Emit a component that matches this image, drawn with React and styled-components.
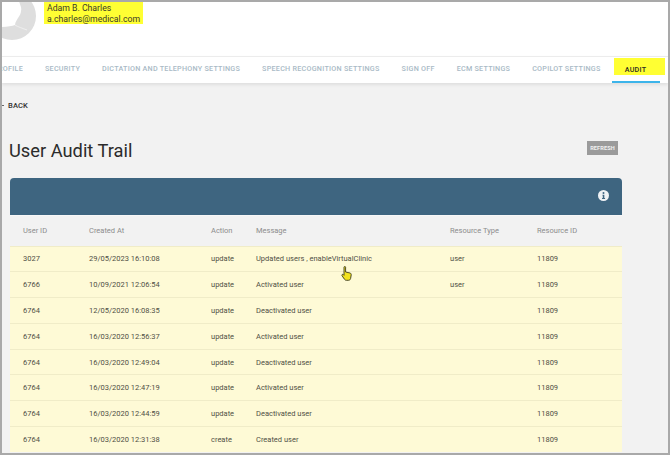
import React from "react";
import styled, { createGlobalStyle } from "styled-components";

const Global = createGlobalStyle`
  html, body { margin: 0; padding: 0; background: #f2f2f2; }
  * { box-sizing: border-box; }
`;

const Frame = styled.div`
  width: 670px;
  height: 455px;
  border: 2px solid #a9a9a9;
  background: #f2f2f2;
  overflow: hidden;
  font-family: Roboto, "Liberation Sans", sans-serif;
  display: flex;
  flex-direction: column;
`;

const Header = styled.header`
  height: 54px;
  flex: none;
  background: #fff;
  display: flex;
  align-items: flex-start;
  overflow: hidden;
`;

const Avatar = styled.svg`
  width: 34px;
  height: 38px;
  flex: none;
  display: block;
`;

const UserInfo = styled.div`
  margin-left: 8px;
  width: 99px;
  height: 22px;
  padding: 1px 0 0 3px;
  background: #ffff33;
  color: #3a3a2a;
  font-size: 8.7px;
  line-height: 10.5px;
`;

const Tabs = styled.nav`
  height: 27px;
  flex: none;
  background: #fff;
  border-top: 1px solid #ececec;
  box-shadow: 0 2px 3px rgba(0, 0, 0, 0.08);
  display: flex;
  align-items: stretch;
  white-space: nowrap;
  position: relative;
`;

const TabClip = styled.span`
  width: 21px;
  flex: none;
  overflow: hidden;
  display: flex;
  justify-content: flex-end;
  align-items: stretch;
`;

const Tab = styled.span`
  flex: none;
  margin-left: ${(p) => p.$gap ?? 0}px;
  padding-bottom: 3px;
  display: flex;
  align-items: center;
  color: #a9bac6;
  font-size: 7.2px;
  font-weight: 500;
  letter-spacing: 0.25px;
`;

const ActiveTab = styled.span`
  flex: none;
  margin-left: 11px;
  width: 48px;
  position: relative;
  border-bottom: 2px solid #3cb4ea;
  height: 26px;
`;

const ActiveLabel = styled.span`
  position: absolute;
  left: 2px;
  top: 1px;
  width: 51px;
  height: 17px;
  background: #ffff33;
  color: #2c2c20;
  font-size: 7.2px;
  font-weight: 500;
  letter-spacing: 0.25px;
  display: flex;
  align-items: center;
  justify-content: center;
  padding: 5px 7px 0 0;
`;

const Back = styled.div`
  margin: 17px 0 0 0;
  height: 10px;
  display: flex;
  align-items: center;
  gap: 4px;
  color: #333;
  font-size: 7.6px;
  font-weight: 500;
  letter-spacing: 0.1px;
`;

const BackDash = styled.span`
  width: 2px;
  height: 1px;
  background: #666;
`;

const TitleRow = styled.div`
  width: 609px;
  margin: 26px 0 0 7px;
  height: 30px;
  display: flex;
  align-items: center;
  justify-content: space-between;
`;

const Title = styled.h1`
  margin: 0;
  font-size: 18.3px;
  font-weight: 400;
  color: #2b2b2b;
  line-height: 30px;
`;

const Refresh = styled.button`
  width: 31px;
  height: 14px;
  margin: 0 0 7px;
  padding: 0;
  border: 0;
  background: #9b9b9b;
  color: #f1f1f1;
  font-family: inherit;
  font-size: 5.6px;
  font-weight: 700;
  letter-spacing: 0.1px;
`;

const Card = styled.section`
  width: 612px;
  margin: 12px 0 0 8px;
`;

const CardBar = styled.div`
  height: 37px;
  background: #3e6580;
  border-radius: 4px 4px 0 0;
  display: flex;
  align-items: center;
  justify-content: flex-end;
  padding: 0 13px 2px 0;
`;

const InfoIcon = styled.svg`
  width: 11px;
  height: 11px;
  display: block;
`;

const Row = styled.div`
  display: grid;
  grid-template-columns: 66px 122px 45px 194px 87px 1fr;
  padding-left: 13px;
  align-items: center;
  font-size: 7.5px;
  height: ${(p) => (p.$head ? "30.5px" : "25.8px")};
  color: ${(p) => (p.$head ? "#8c8c8c" : "#4f4f45")};
  background: ${(p) => (p.$head ? "#f2f2f2" : "#fefad6")};
  border-top: 1px solid ${(p) => (p.$head ? "#f7f7f7" : "#f0ecc8")};
`;

const Cell = styled.span`
  white-space: nowrap;
`;

const PointerWrap = styled.div`
  position: relative;
`;

const Pointer = styled.svg`
  position: absolute;
  left: 331px;
  top: 20px;
  width: 11px;
  height: 15px;
`;

const columns = ["User ID", "Created At", "Action", "Message", "Resource Type", "Resource ID"];
const rows = [
  ["3027", "29/05/2023 16:10:08", "update", "Updated users , enableVirtualClinic", "user", "11809"],
  ["6766", "10/09/2021 12:06:54", "update", "Activated user", "user", "11809"],
  ["6764", "12/05/2020 16:08:35", "update", "Deactivated user", "", "11809"],
  ["6764", "16/03/2020 12:56:37", "update", "Activated user", "", "11809"],
  ["6764", "16/03/2020 12:49:04", "update", "Deactivated user", "", "11809"],
  ["6764", "16/03/2020 12:47:19", "update", "Activated user", "", "11809"],
  ["6764", "16/03/2020 12:44:59", "update", "Deactivated user", "", "11809"],
  ["6764", "16/03/2020 12:31:38", "create", "Created user", "", "11809"],
];

export default function App() {
  return (
    <Frame>
      <Global />
      <Header>
        <Avatar viewBox="0 0 34 38">
          <circle cx="10" cy="14" r="24" fill="#dedede" />
          <path d="M-1 -1H17C18 3 20 6 19 9C19 11 18 13 16 16C15 18 13 20 13 23C10 24 5 25 -1 25Z" fill="#fff" />
          <path d="M13 23C16 25 20 26 25 28" fill="none" stroke="#f2f2f2" strokeWidth=".8" />
        </Avatar>
        <UserInfo>
          Adam B. Charles
          <br />
          a.charles@medical.com
        </UserInfo>
      </Header>
      <Tabs>
        <TabClip>
          <Tab>PROFILE</Tab>
        </TabClip>
        <Tab $gap={22}>SECURITY</Tab>
        <Tab $gap={22}>DICTATION AND TELEPHONY SETTINGS</Tab>
        <Tab $gap={22}>SPEECH RECOGNITION SETTINGS</Tab>
        <Tab $gap={22}>SIGN OFF</Tab>
        <Tab $gap={22}>ECM SETTINGS</Tab>
        <Tab $gap={22}>COPILOT SETTINGS</Tab>
        <ActiveTab>
          <ActiveLabel>AUDIT</ActiveLabel>
        </ActiveTab>
      </Tabs>
      <Back>
        <BackDash />
        BACK
      </Back>
      <TitleRow>
        <Title>User Audit Trail</Title>
        <Refresh>REFRESH</Refresh>
      </TitleRow>
      <Card>
        <CardBar>
          <InfoIcon viewBox="0 0 12 12">
            <circle cx="6" cy="6" r="6" fill="#eef2f5" />
            <circle cx="6" cy="3.2" r="1.1" fill="#3e6580" />
            <path d="M4.8 5.1H6.9V8.8H7.7V9.8H4.4V8.8H5.2V6.1H4.8Z" fill="#3e6580" />
          </InfoIcon>
        </CardBar>
        <Row $head>
          {columns.map((c) => (
            <Cell key={c}>{c}</Cell>
          ))}
        </Row>
        <PointerWrap>
          {rows.map((r, i) => (
            <Row key={i}>
              {r.map((v, j) => (
                <Cell key={j}>{v}</Cell>
              ))}
            </Row>
          ))}
          <Pointer viewBox="0 0 11 15">
            <path d="M3 1.2C3 .3 4.6.3 4.6 1.2V6L9 7C10 7.3 10.3 8 10.2 9L9.6 12.5C9.4 13.6 8.6 14.3 7.4 14.3H5.4C4.6 14.3 4 14 3.5 13.3L1 9.7C.4 8.8 1.5 7.9 2.3 8.6L3 9.3Z" fill="#f2e21e" stroke="#3a3a20" strokeWidth=".9" />
          </Pointer>
        </PointerWrap>
      </Card>
    </Frame>
  );
}
